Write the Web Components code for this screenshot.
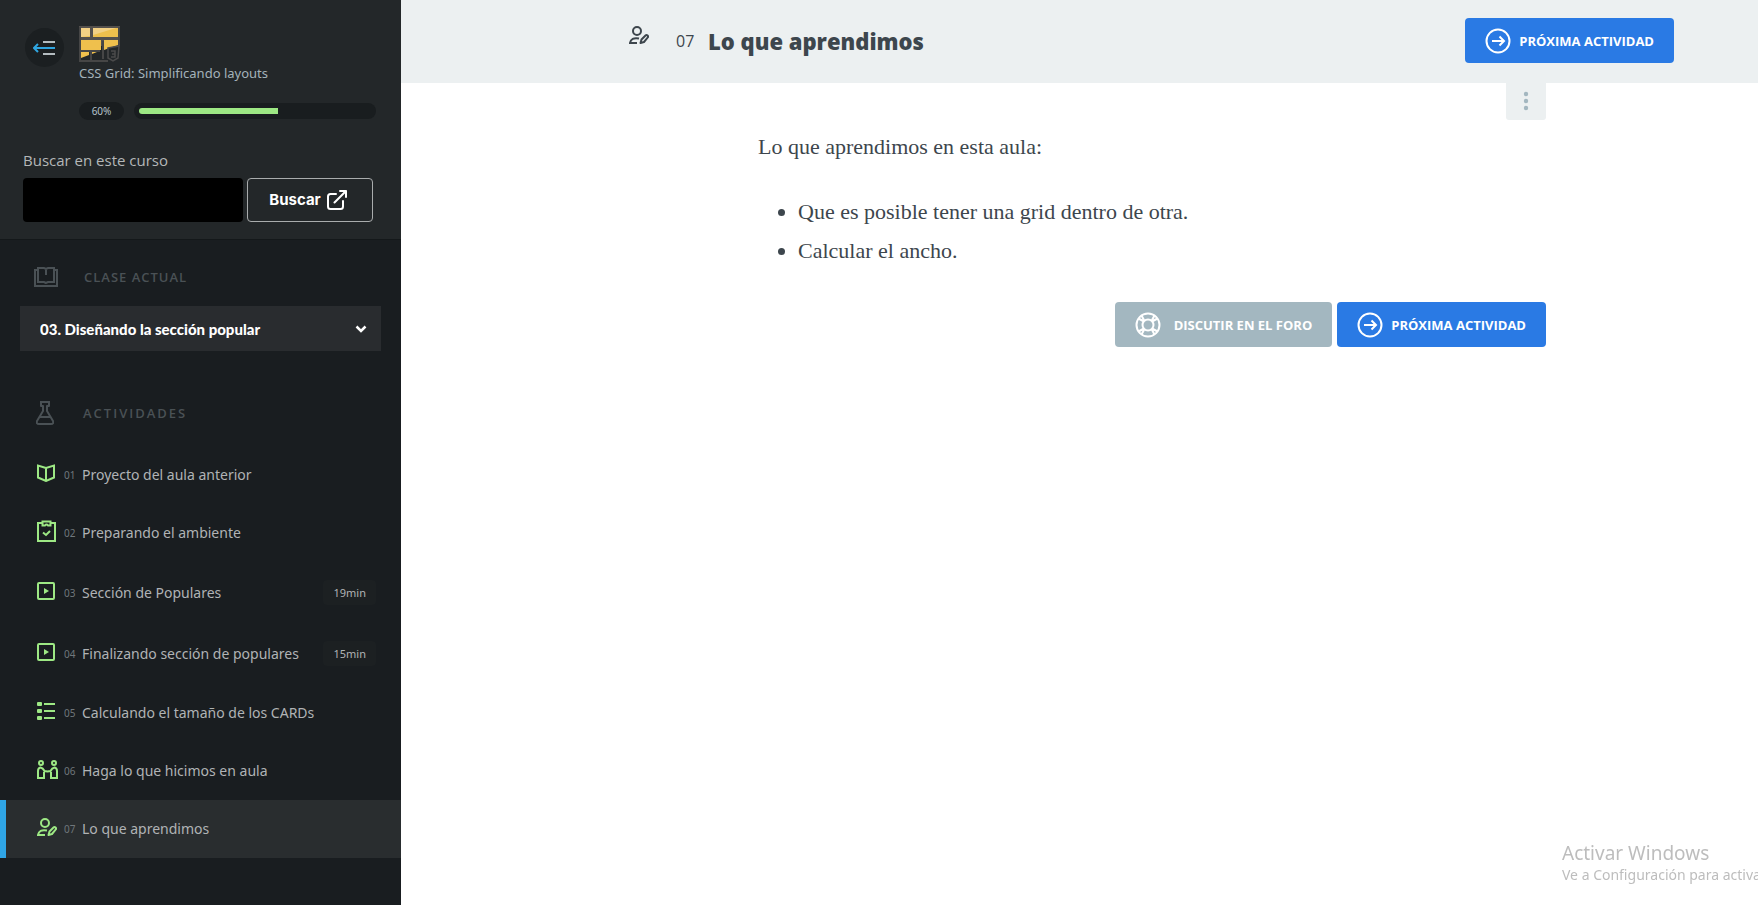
<!DOCTYPE html>
<html lang="es">
<head>
<meta charset="utf-8">
<title>CSS Grid: Simplificando layouts</title>
<style>
html,body{margin:0;height:100%}
body{font-family:"Noto Sans","Open Sans",sans-serif;background:#fff;color:#3d464d;overflow-x:hidden}
</style>
</head>
<body>
<course-app></course-app>
<script>
const define=(name,html,setup)=>{
  const t=document.createElement('template');
  t.innerHTML='<style>*{box-sizing:border-box}</style>'+html;
  customElements.define(name,class extends HTMLElement{
    constructor(){super();this.attachShadow({mode:'open'});}
    connectedCallback(){
      if(this.shadowRoot.childNodes.length)return;
      this.shadowRoot.append(t.content.cloneNode(true));
      if(setup)setup.call(this,this.shadowRoot);
    }
  });
};

/* box: [width, height] of the glyph; body: its strokes */
const ICONS={
  back:[22,16,'<g fill="none" stroke-width="2"><path stroke="#b4bcc0" d="M10 2h12M10 14h12"/><path stroke="#2fa5e0" d="M1 8h21M5 4L1 8l4 4"/></g>'],
  external:[20,20,'<path fill="none" stroke="currentColor" stroke-width="2" stroke-linecap="round" stroke-linejoin="round" d="M9 4H3.500Q1 4 1 6.500v10Q1 19 3.500 19h10q2.500 0 2.500-2.500V11M13 1h6v6M19 1L7.500 12.500"/>'],
  lesson:[24,22,'<g fill="none" stroke="currentColor" stroke-width="2"><path d="M4 4H1v16h22V4h-3"/><path d="M12 17l-2-1H4V2h6l2 1 2-1h6v14h-6zM12 3v6"/></g>'],
  flask:[18,24,'<path fill="none" stroke="currentColor" stroke-width="2" stroke-linejoin="round" d="M4 1h10M5 2v3h2v5L1 20q-1 3 2 3h12q3 0 2-3l-6-10V5h2V2M4 16h10"/>'],
  book:[18,18,'<path fill="none" stroke="currentColor" stroke-width="2" d="M9 4L1 1.500v12L9 17l8-3.500v-12zM9 4v13"/>'],
  task:[19,22,'<g fill="none" stroke="currentColor" stroke-width="2"><path d="M5 3H1v18h17V3h-4"/><path d="M5.500 1.500h8v4H11q-1.500-2-3 0H5.500z"/><path d="M6 12.500l3 2.500 4-4"/></g>'],
  video:[18,18,'<rect x="1" y="1" width="16" height="16" rx="1" fill="none" stroke="currentColor" stroke-width="2"/><path fill="currentColor" d="M7 6l5 3-5 3z"/>'],
  list:[18,18,'<g fill="currentColor"><rect width="5" height="4" rx="1"/><rect y="7" width="5" height="4" rx="1"/><rect y="14" width="5" height="4" rx="1"/><path d="M7 1h11v2H7zM7 8h11v2H7zM7 15h11v2H7z"/></g>'],
  people:[21,19,'<g fill="none" stroke="currentColor" stroke-width="2"><circle cx="4" cy="3" r="2"/><circle cx="17" cy="3" r="2"/><path d="M7 12v6H1V11q0-3 2.500-3.500Q6 8 7.500 11l3 .500 3-.500Q15 8 17.500 7.500 20 8 20 11v7h-6v-6"/></g>'],
  author:[20,18,'<g fill="none" stroke="currentColor" stroke-width="2"><circle cx="8" cy="5" r="4"/><path d="M10 12.500Q2 11 1 17h7"/><path stroke-linejoin="round" d="M11.500 17l1-3.500 4-4q1-1 2 0t.200 2L15 16z"/></g>'],
  next:[26,26,'<g fill="none" stroke="currentColor" stroke-width="2"><circle cx="13" cy="13" r="11.500"/><path d="M7 13h12M14.500 8.500L19 13l-4.500 4.500"/></g>'],
  forum:[26,26,'<g fill="none" stroke="currentColor" stroke-width="2"><circle cx="13" cy="13" r="11.500"/><circle cx="13" cy="13" r="5.500"/><path d="M3.500 6.500l5.500 3M6.500 3.500l3 5.500M22.500 6.500L17 9.500M19.500 3.500l-3 5.500M3.500 19.500l5.500-3M6.500 22.500l3-5.500M22.500 19.500l-5.500-3M19.500 22.500l-3-5.500"/></g>'],
  chevron:[12,8,'<path fill="none" stroke="currentColor" stroke-width="2.500" d="M1.500 1.500L6 6l4.500-4.500"/>'],
  dots:[6,20,'<g fill="currentColor"><circle cx="3" cy="3" r="2.200"/><circle cx="3" cy="10" r="2.200"/><circle cx="3" cy="17" r="2.200"/></g>'],
  grid:[41,36,'<path fill="#54504c" d="M0 0h41v20H0z"/><path fill="#232729" d="M2 26h22l16-7v15H2z"/><path fill="#efc04d" d="M2 2h9v9H2zM14 2h25v9H14zM2 14h20v10H2zM25 14h14v5l-14 5zM2 26h8v3l-8 3zM13 26h5l-5 2z"/><path fill="#f3d185" d="M2 2h9v8l-9 1zM14 2h23L14 9z"/><path fill="none" stroke="#464646" stroke-width="2" d="M1 1v34h28M40 1v18M12 25v9M24 15v18M1 25h20"/><path fill="#232729" stroke="#4b4b4b" stroke-width="1.500" d="M29 22l11-2-1 12-5 3-5-3z"/><path fill="none" stroke="#4b4b4b" stroke-width="1.500" d="M32 25h4v6h-4M33 28h3"/>']
};
customElements.define('ui-icon',class extends HTMLElement{
  static observedAttributes=['name'];
  constructor(){super();this.attachShadow({mode:'open'});}
  attributeChangedCallback(){
    const icon=ICONS[this.getAttribute('name')];
    if(!icon)return;
    const [w,h,body]=icon;
    this.shadowRoot.innerHTML=`<style>:host{display:inline-flex;flex:none}svg{display:block}</style><svg width="${w}" height="${h}" viewBox="0 0 ${w} ${h}" aria-hidden="true">${body}</svg>`;
  }
});

define('action-button',`<style>
:host{display:inline-flex}
a{display:flex;align-items:center;gap:8px;height:45px;padding:0 20px;border-radius:4px;background:#2a7ae4;color:#fff;text-decoration:none;text-transform:uppercase;font:700 13px/20px "Open Sans",sans-serif;white-space:nowrap}
:host([muted]) a{background:#a3b7c0;gap:13px}
</style><a href="#"><ui-icon></ui-icon><span><slot></slot></span></a>`,function(root){
  root.querySelector('ui-icon').setAttribute('name',this.getAttribute('icon'));
});

define('course-header',`<style>
:host{display:block;background:#232729;border-bottom:1px solid #14181a}
.top{display:grid;grid-template-columns:39px 1fr;column-gap:15px;padding:26px 25px 0}
.back{width:39px;height:39px;margin-top:2px;border:0;border-radius:50%;background:#1b1f21;padding:0 2px 0 0;display:grid;place-items:center}
.title{display:block;color:#a4b2ba;font-size:13px;line-height:20px;text-decoration:none}
.title ui-icon{display:flex;margin-bottom:1px}
.progress{display:flex;align-items:center;gap:10px;margin-top:19px}
.pct{width:45px;border-radius:9px;background:#191d1f;color:#b5c3ca;font-size:10px;line-height:18px;text-align:center}
.bar{flex:1;height:16px;padding:5px;border-radius:8px;background:#191d1f}
.fill{width:60%;height:6px;border-radius:3px 0 0 3px;background:#9de884}
form{padding:28px 28px 17px 23px;display:grid;grid-template-columns:1fr 126px;gap:4px}
label{grid-column:1/-1;font:15px/24px "Open Sans",sans-serif;color:#b4b7b8;margin-bottom:2px}
input{height:44px;min-width:0;width:100%;border:0;border-radius:4px;background:#000;color:#fff;padding:0 12px}
form button{height:44px;border:1px solid #a9acad;border-radius:4px;background:none;color:#fff;font:700 15px/20px Inter,sans-serif;display:flex;align-items:center;justify-content:center;gap:6px;padding:0 4px 0 0}
</style>
<div class="top">
  <button class="back" type="button" aria-label="Ocultar menú"><ui-icon name="back"></ui-icon></button>
  <div>
    <a class="title" href="#"><ui-icon name="grid"></ui-icon>CSS Grid: Simplificando layouts</a>
    <div class="progress"><span class="pct">60%</span><div class="bar" role="progressbar" aria-valuenow="60" aria-label="Progreso"><div class="fill"></div></div></div>
  </div>
</div>
<form><label for="q">Buscar en este curso</label><input id="q" type="search"><button type="button">Buscar <ui-icon name="external"></ui-icon></button></form>`);

define('section-heading',`<style>
:host{display:flex;align-items:center;color:#4a5155}
.ico{width:24px;margin-right:26px;display:flex;justify-content:center}
h2{margin:0;font:600 13px/20px "Open Sans",sans-serif;letter-spacing:var(--tracking,1px)}
</style><span class="ico"><ui-icon></ui-icon></span><h2><slot></slot></h2>`,function(root){
  root.querySelector('ui-icon').setAttribute('name',this.getAttribute('icon'));
});

define('class-picker',`<style>
:host{display:grid;align-items:center}
select,ui-icon{grid-area:1/1}
select{appearance:none;width:100%;height:45px;border:0;border-radius:0;background:#292c2f;color:#fff;padding:0 40px 0 20px;font:900 15px/20px Lato,sans-serif}
ui-icon{justify-self:end;margin-right:14px;color:#fff;pointer-events:none}
</style><select aria-label="Clase actual"><option>03. Diseñando la sección popular</option></select><ui-icon name="chevron"></ui-icon>`);

define('activity-item',`<style>
:host{display:block}
a{display:flex;align-items:center;padding:18px 25px 18px 37px;color:#b0b3b5;text-decoration:none;font-size:14px;line-height:22px}
ui-icon{color:#9de884;margin-bottom:4px}
.ico{width:27px;height:22px;display:flex;align-items:center}
.num{width:18px;font-size:10px;color:#70777b}
.dur{margin-left:auto;padding:0 10px;border-radius:4px;background:#1c2022;font-size:11px;line-height:25px}
.dur[hidden]{display:none}
.name{white-space:nowrap}
:host([current]) a{background:#292d2f;box-shadow:inset 6px 0 #2fa5e6}
</style><a href="#"><span class="ico"><ui-icon></ui-icon></span><span class="num"></span><span class="name"><slot></slot></span><span class="dur" hidden></span></a>`,function(root){
  root.querySelector('ui-icon').setAttribute('name',this.getAttribute('icon'));
  root.querySelector('.num').textContent=this.getAttribute('num');
  const d=this.getAttribute('duration'),el=root.querySelector('.dur');
  if(d){el.textContent=d;el.hidden=false;}
});

define('course-sidebar',`<style>
:host{display:block;background:#191d20}
.current{padding:26px 20px 0}
.current section-heading{padding-left:14px;margin-bottom:18px}
.activities section-heading{--tracking:2px;padding:50px 0 0 33px;margin-bottom:21px}
</style>
<course-header></course-header>
<div class="current"><section-heading icon="lesson">CLASE ACTUAL</section-heading><class-picker></class-picker></div>
<div class="activities"><section-heading icon="flask">ACTIVIDADES</section-heading>
<nav>
<activity-item icon="book" num="01">Proyecto del aula anterior</activity-item>
<activity-item icon="task" num="02">Preparando el ambiente</activity-item>
<activity-item icon="video" num="03" duration="19min">Sección de Populares</activity-item>
<activity-item icon="video" num="04" duration="15min">Finalizando sección de populares</activity-item>
<activity-item icon="list" num="05">Calculando el tamaño de los CARDs</activity-item>
<activity-item icon="people" num="06">Haga lo que hicimos en aula</activity-item>
<activity-item icon="author" num="07" current>Lo que aprendimos</activity-item>
</nav></div>`);

define('task-header',`<style>
:host{display:grid;grid-template-columns:228fr minmax(0,1045px) 84fr;align-items:center;box-sizing:border-box;height:83px;padding-bottom:2px;background:#ecf0f1}
.in{grid-column:2;display:flex;align-items:center}
.in>ui-icon{margin:0 27px 12px 0}
.num{font:16px/20px "Open Sans",sans-serif;width:32px}
h1{margin:0;font:800 22px/32px "Open Sans",sans-serif}
action-button{margin-left:auto}
</style><div class="in"><ui-icon name="author"></ui-icon><span class="num">07</span><h1>Lo que aprendimos</h1><action-button icon="next">Próxima actividad</action-button></div>`);

define('task-body',`<style>
:host{display:grid;grid-template-columns:357fr minmax(0,788px) 212fr}
article{grid-column:2;font:22px/39px "Liberation Serif",serif;color:#3d464d}
.menu{display:grid;place-items:center;margin-left:auto;width:40px;height:37px;padding:0 0 2px;border:0;border-radius:0 0 3px 3px;background:#ecf0f1;color:#a3b7c0}
p{margin:7px 0 26px}
ul{margin:0 0 32px;padding-left:40px}
.actions{display:flex;justify-content:flex-end;gap:5px}
</style><article><button class="menu" type="button" aria-label="Opciones"><ui-icon name="dots"></ui-icon></button>
<p>Lo que aprendimos en esta aula:</p>
<ul><li>Que es posible tener una grid dentro de otra.</li><li>Calcular el ancho.</li></ul>
<div class="actions"><action-button icon="forum" muted>Discutir en el foro</action-button><action-button icon="next">Próxima actividad</action-button></div></article>`);

define('system-notice',`<style>
:host{position:fixed;right:0;bottom:20px;width:196px;white-space:nowrap;color:#bdbdbd;pointer-events:none}
b,span{display:block;font-weight:400}
b{font-size:19px;line-height:24px}
span{font-size:14px;line-height:20px}
</style><b>Activar Windows</b><span>Ve a Configuración para activa</span>`);

define('course-app',`<style>
:host{display:grid;grid-template-columns:401px minmax(0,1fr);min-height:100vh}
</style><course-sidebar></course-sidebar><main><task-header></task-header><task-body></task-body></main><system-notice></system-notice>`);
</script>
</body>
</html>
